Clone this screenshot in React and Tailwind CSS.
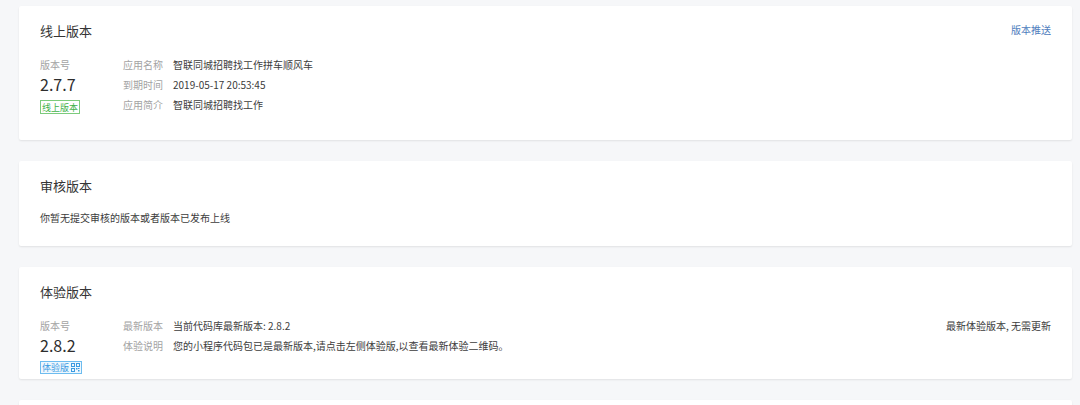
const font = { fontFamily: '"Noto Sans CJK SC", "Liberation Sans", sans-serif' };

function QrIcon() {
  return (
    <svg width="9" height="9" viewBox="0 0 9 9" className="shrink-0">
      <rect x="0.5" y="0.5" width="3" height="3" fill="none" stroke="#3a9be2" strokeWidth="1" />
      <rect x="5.5" y="0.5" width="3" height="3" fill="none" stroke="#3a9be2" strokeWidth="1" />
      <rect x="0.5" y="5.5" width="3" height="3" fill="none" stroke="#3a9be2" strokeWidth="1" />
      <rect x="5" y="5" width="1.5" height="1.5" fill="#3a9be2" />
      <rect x="7" y="7" width="1.5" height="1.5" fill="#3a9be2" />
      <rect x="7" y="5" width="1.5" height="1" fill="#3a9be2" />
    </svg>
  );
}

function Card({ children, className = "" }) {
  return (
    <div className={"bg-white rounded-[2px] shadow-[0_1px_2px_rgba(0,0,0,0.09)] px-[21px] " + className}>
      {children}
    </div>
  );
}

function Title({ children, right }) {
  return (
    <div className="flex items-center justify-between h-[20px]">
      <h2 className="text-[13px] leading-[20px] text-[#353535]">{children}</h2>
      {right}
    </div>
  );
}

function InfoRow({ label, value }) {
  return (
    <div className="flex h-[20px] items-center text-[10px]">
      <span className="w-[50px] text-[#a3a3a3]">{label}</span>
      <span className="text-[#3c3c3c]">{value}</span>
    </div>
  );
}

function VersionCol({ version, badge }) {
  return (
    <div className="w-[83px] shrink-0 flex flex-col items-start">
      <div className="h-[20px] flex items-center text-[10px] text-[#a3a3a3]">版本号</div>
      <div className="h-[20px] flex items-center text-[16px] text-[#2e2e2e]">{version}</div>
      {badge}
    </div>
  );
}

export default function App() {
  return (
    <div className="min-h-[405px] bg-[#f6f7f9] pl-[19px] pr-[8px] pt-[6px] flex flex-col gap-[21px] w-[1080px]" style={font}>
      <Card className="pt-[15px] pb-[26px]">
        <Title right={<a className="text-[10px] text-[#4f7dbd] -mt-[4px]">版本推送</a>}>线上版本</Title>
        <div className="flex mt-[13px]">
          <VersionCol
            version="2.7.7"
            badge={
              <span className="mt-[6px] flex items-center h-[14px] px-[1px] border border-[#7ccb7c] text-[9px] leading-none text-[#42b24a]">
                线上版本
              </span>
            }
          />
          <div>
            <InfoRow label="应用名称" value="智联同城招聘找工作拼车顺风车" />
            <InfoRow label="到期时间" value="2019-05-17 20:53:45" />
            <InfoRow label="应用简介" value="智联同城招聘找工作" />
          </div>
        </div>
      </Card>

      <Card className="pt-[15px] pb-[19px]">
        <Title>审核版本</Title>
        <p className="mt-[11px] h-[20px] flex items-center text-[10px] text-[#3c3c3c]">你暂无提交审核的版本或者版本已发布上线</p>
      </Card>

      <Card className="pt-[15px] pb-[5px]">
        <Title>体验版本</Title>
        <div className="flex mt-[13px]">
          <VersionCol
            version="2.8.2"
            badge={
              <span className="mt-[6px] flex items-center gap-[2px] h-[13px] px-[1px] border border-[#6dbcef] bg-[#eef7fe] text-[9px] leading-none text-[#3a9be2]">
                体验版
                <QrIcon />
              </span>
            }
          />
          <div className="flex-1">
            <div className="flex justify-between">
              <InfoRow label="最新版本" value="当前代码库最新版本: 2.8.2" />
              <span className="h-[20px] flex items-center text-[10px] text-[#3c3c3c]">最新体验版本, 无需更新</span>
            </div>
            <InfoRow label="体验说明" value="您的小程序代码包已是最新版本,请点击左侧体验版,以查看最新体验二维码。" />
          </div>
        </div>
      </Card>

      <Card className="h-[30px]" />
    </div>
  );
}
